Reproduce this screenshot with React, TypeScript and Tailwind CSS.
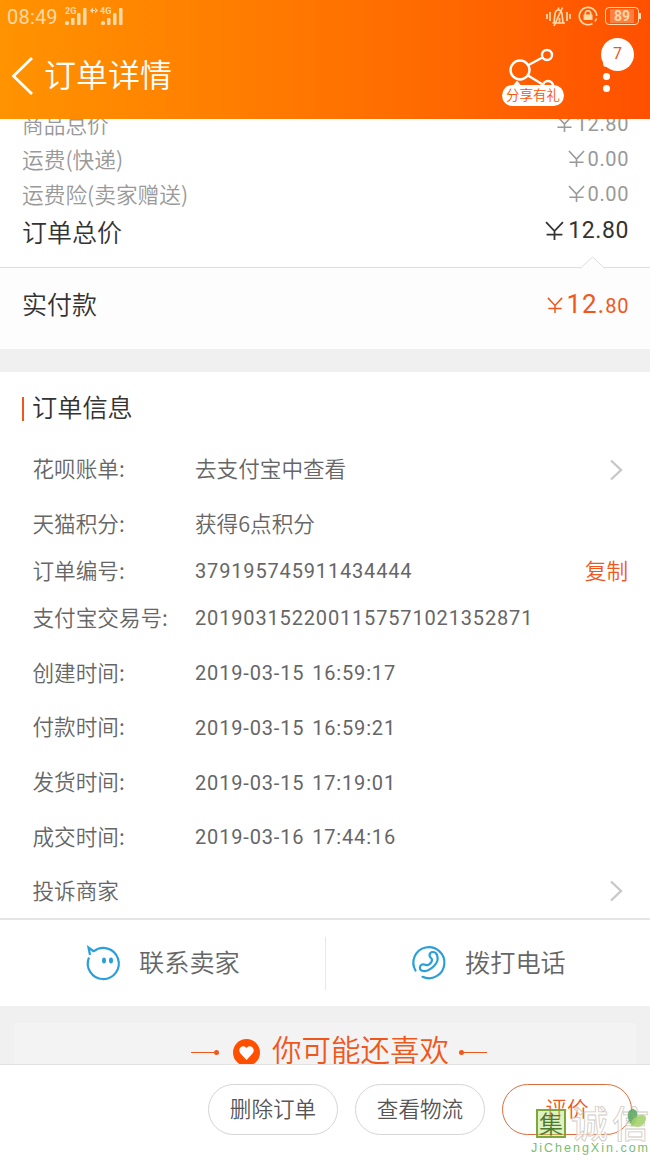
const fees = [
  { label: "商品总价", price: "12.80", row: "h-[35px] -mt-[12px]" },
  { label: "运费(快递)", price: "0.00", row: "h-[35px]" },
  { label: "运费险(卖家赠送)", price: "0.00", row: "h-[35px]" },
];

const infos = [
  { label: "花呗账单:", value: "去支付宝中查看", row: "h-[55px]", arrow: true },
  { label: "天猫积分:", value: "获得6点积分", row: "h-[55px]" },
  { label: "订单编号:", value: "379195745911434444", row: "h-[38px]", number: true, copy: true },
  { label: "支付宝交易号:", value: "2019031522001157571021352871", row: "h-[56px]", number: true },
  { label: "创建时间:", value: "2019-03-15 16:59:17", row: "h-[54px]", number: true },
  { label: "付款时间:", value: "2019-03-15 16:59:21", row: "h-[55px]", number: true },
  { label: "发货时间:", value: "2019-03-15 17:19:01", row: "h-[55px]", number: true },
  { label: "成交时间:", value: "2019-03-16 17:44:16", row: "h-[54px]", number: true },
  { label: "投诉商家", value: "", row: "h-[54px]", arrow: true },
];

const Yen = ({ className }: { className: string }) => (
  <svg className={className} viewBox="0 0 18 18" fill="none" stroke="currentColor" strokeWidth="1.7">
    <path d="M1 1 9 9.5 17 1M9 9.5V18M1.5 13h15" />
  </svg>
);

const Arrow = () => (
  <svg className="mr-[1px] h-[22px] w-[20px]" viewBox="0 0 20 22" fill="none" stroke="#c8c8c8" strokeWidth="2.4">
    <path d="m4 1.5 10 9.5-10 9.5" />
  </svg>
);

const Signal = () => (
  <svg className="h-[17px] w-[22px]" viewBox="0 0 22 17" fill="currentColor">
    <rect x="0" y="13" width="4" height="4" rx="1.5" />
    <rect x="6" y="10" width="3.5" height="7" rx="1" />
    <rect x="12" y="5" width="3.5" height="12" rx="1" />
    <rect x="18" y="0" width="3.5" height="17" rx="1" />
  </svg>
);

const StatusBar = () => (
  <div className="flex h-8 items-center justify-between pr-[9px] pl-[7px] text-[#ffd9a8]">
    <div className="flex items-center">
      <span className="w-[57px] pt-[2px] font-[Roboto] text-[20px] leading-none font-normal tracking-[0.2px]">08:49</span>
      <div className="relative ml-[1px] flex gap-[14px]">
        <Signal />
        <Signal />
        <span className="absolute -top-[2px] left-0 font-[Roboto] text-[9px] leading-[10px] font-bold">2G</span>
        <span className="absolute -top-[2px] left-[35px] font-[Roboto] text-[9px] leading-[10px] font-bold">4G</span>
        <svg className="absolute -top-[1px] left-[25px] h-[7px] w-[8px]" viewBox="0 0 8 7" fill="currentColor">
          <path d="M0 3.5 3 .5v6zM8 3.5 5 .5v6zM2 3h4v1H2z" />
        </svg>
      </div>
    </div>
    <div className="flex items-center">
      <svg className="h-[21px] w-[25px]" viewBox="0 0 25 21" fill="none" stroke="currentColor" strokeWidth="1.7">
        <path d="M1 8v5M4 6v9M21 6v9M24 8v5" />
        <path d="M6.5 17h12.5M8 16.5l1-8.5c.4-3 1.5-4 3.500-4s3 1 3.500 4l1 8.500M12.500 4V1.500M16.500 1.500 8 20M13.500 12v5" />
      </svg>
      <svg className="ml-[7px] h-5 w-5" viewBox="0 0 20 20" fill="none" stroke="currentColor" strokeWidth="1.6">
        <path d="M14.500 17.500A8.700 8.700 0 1 1 18.700 10M18.500 12.500l-1.500 3" />
        <rect x="5.500" y="8.500" width="9" height="5.500" fill="currentColor" stroke="none" />
        <path d="M7.300 9V7.500a2.700 2.700 0 0 1 5.400 0V9" />
      </svg>
      <div className="ml-[7px] flex h-[18px] w-[34px] items-center justify-center rounded-[4px] border-[1.5px] border-current">
        <span className="h-[14px] bg-white/25 px-[4px] font-[Roboto] text-[14px] leading-[14px] font-bold">89</span>
      </div>
      <span className="h-[6px] w-[2px] bg-current" />
    </div>
  </div>
);

const Header = () => (
  <header className="relative z-10 h-[119px] shrink-0 bg-linear-to-r from-[#ff9300] to-[#ff5000]">
    <StatusBar />
    <div className="flex h-[87px] items-center justify-between pr-[16px] pl-[11px] text-white">
      <div className="flex items-center">
        <svg className="h-[40px] w-[23px]" viewBox="0 0 23 40" fill="none" stroke="currentColor" strokeWidth="2.8">
          <path d="M21 2 2.5 20 21 38" />
        </svg>
        <h1 className="ml-[10px] pb-[5px] text-[32px] leading-none">订单详情</h1>
      </div>
      <div className="flex items-start">
        <div className="relative h-[60px] w-[62px]">
          <svg className="absolute top-[2px] left-[6px] h-[44px] w-[50px]" viewBox="0 0 50 44" fill="none" stroke="currentColor" strokeWidth="2.4">
            <circle cx="12" cy="22" r="9.5" />
            <circle cx="39" cy="7" r="5" />
            <circle cx="40" cy="38" r="5" />
            <path d="m20.500 17 14-7.500M20 27.500 35.500 37" />
          </svg>
          <span className="absolute top-[39px] left-0 flex h-[21px] w-[62px] items-center justify-center rounded-full bg-white pb-[1px] text-[13.5px] leading-none text-[#ff5000]">
            分享有礼
          </span>
          <span className="absolute top-[35px] left-[11px] h-[5px] w-[8px] bg-white [clip-path:polygon(50%_0,100%_100%,0_100%)]" />
        </div>
        <div className="relative ml-[37px] h-[60px] w-[33px]">
          <span className="absolute top-[14px] left-[2px] size-[7px] rounded-full bg-white" />
          <span className="absolute top-[27px] left-[2px] size-[7px] rounded-full bg-white" />
          <span className="absolute top-[39px] left-[2px] size-[7px] rounded-full bg-white" />
          <span className="absolute -top-[8px] left-0 flex size-[33px] items-center justify-center rounded-full bg-white font-[Roboto] text-[16px] font-normal text-[#e85a20]">
            7
          </span>
        </div>
      </div>
    </div>
  </header>
);

const PriceSummary = () => (
  <section className="flex shrink-0 flex-col bg-white">
    <div className="flex h-[148px] flex-col pt-[1px] pr-[21px] pl-[22px]">
      {fees.map((fee) => (
        <div key={fee.label} className={`flex shrink-0 items-center justify-between text-[#999] ${fee.row}`}>
          <span className="pb-[3px] text-[21.7px] leading-none">{fee.label}</span>
          <span className="flex items-center pb-[4px] font-[Roboto] text-[20px] leading-none font-normal tracking-[0.6px]">
            <Yen className="mr-[3px] size-[17px]" />
            {fee.price}
          </span>
        </div>
      ))}
      <div className="flex h-[39px] shrink-0 items-center justify-between text-[#333]">
        <span className="pb-[2px] text-[25px] leading-none">订单总价</span>
        <span className="flex items-center pb-[4px] font-[Roboto] text-[23px] leading-none font-normal tracking-[0.6px]">
          <Yen className="mr-[4px] size-[19px]" />
          12.80
        </span>
      </div>
    </div>
    <div className="relative flex h-[82px] items-center justify-between border-t border-[#dedede] bg-[#fdfdfd] pr-[21px] pb-[7px] pl-[22px]">
      <svg className="absolute -top-[12px] left-[580px] h-[13px] w-[25px]" viewBox="0 0 25 13" fill="#fdfdfd" stroke="#dedede">
        <path d="M0 12.500 12.500 1 25 12.500" />
      </svg>
      <span className="pb-[4px] text-[25px] leading-none text-[#333]">实付款</span>
      <span className="flex items-baseline pb-[2px] font-[Roboto] leading-none font-normal tracking-[0.6px] text-[#f0571d]">
        <Yen className="mr-[4px] size-[16px]" />
        <span className="text-[26px] tracking-[0.9px]">12.</span>
        <span className="text-[20px]">80</span>
      </span>
    </div>
  </section>
);

const OrderInfo = () => (
  <section className="h-[546px] shrink-0 bg-white">
    <div className="flex h-[70px] items-center pl-[22px]">
      <span className="mt-[4px] h-[24px] w-[2px] bg-[#f0571d]" />
      <h2 className="ml-[8px] text-[25.2px] leading-none text-[#333]">订单信息</h2>
    </div>
    {infos.map((info) => (
      <div key={info.label} className={`flex items-center pr-[22px] pl-[32.5px] text-[21.6px] leading-none text-[#666] ${info.row}`}>
        <span className="w-[162.5px] shrink-0 pb-[3px]">{info.label}</span>
        <span
          className={
            info.number ? "grow font-[Roboto] text-[20px] font-normal tracking-[0.84px] [word-spacing:2px]" : "grow pb-[3px]"
          }
        >
          {info.value}
        </span>
        {info.copy && <button className="pb-[3px] text-[#f0571d]">复制</button>}
        {info.arrow && <Arrow />}
      </div>
    ))}
  </section>
);

const Contact = () => (
  <section className="flex h-[88px] shrink-0 items-center border-t-2 border-[#e5e5e5] bg-white text-[25.2px] leading-none text-[#666]">
    <button className="flex h-[53px] w-[326px] items-center border-r border-[#e8e8e8] pl-[84px]">
      <svg className="h-[38px] w-[40px]" viewBox="0 0 40 38" fill="none" stroke="#2a9fdb" strokeWidth="2.2">
        <path d="M9.500 7.500A15.500 15.500 0 1 1 5 13.500M10 7.500 4.500 3.500 6 11" />
        <g fill="#2a9fdb" stroke="none">
          <ellipse cx="20" cy="16.500" rx="2" ry="3" />
          <ellipse cx="27" cy="16.500" rx="2" ry="3" />
        </g>
      </svg>
      <span className="ml-[15px] pb-[3px]">联系卖家</span>
    </button>
    <button className="flex h-[53px] items-center pl-[84px]">
      <svg className="mb-[2px] h-[40px] w-[40px]" viewBox="0 0 40 40" fill="none" stroke="#2a9fdb" strokeWidth="2.2" strokeLinecap="round">
        <path d="M5.500 28.500A15.500 15.500 0 1 1 12.500 34.800" />
        <path d="M19.500 13c.5-4 6-4 7.500 0 1.500 4 0 8-3 11-4 4-9 6-12.500 4.500-2.500-1.500-2-5 .5-6 3-1 3.500 1.500 6 .5 3-1.500 4-3.500 4-5.500-.5-1.500-2.500-2-2.500-4.500z" />
      </svg>
      <span className="ml-[15px] pb-[3px]">拨打电话</span>
    </button>
  </section>
);

const Recommend = () => (
  <section className="h-[58px] shrink-0 overflow-hidden bg-[#f0f0f0] px-[14px] pt-[17px]">
    <div className="flex h-[58px] items-center justify-center bg-[#f3f3f3] pl-[28px] text-[#f0571d]">
      <span className="h-px w-[23px] bg-current" />
      <span className="size-[5px] rounded-full bg-current" />
      <svg className="mx-[14px] size-[27px]" viewBox="0 0 27 27">
        <circle cx="13.500" cy="13.500" r="13.500" fill="#ff5000" />
        <path d="M13.500 21 7.500 14.500C3.500 9.500 10 4.500 13.500 9c3.500-4.500 10 .5 6 5.500z" fill="#fff" />
      </svg>
      <h2 className="-ml-[2px] pb-[6px] text-[29.5px] leading-none">你可能还喜欢</h2>
      <span className="ml-[10px] size-[5px] rounded-full bg-current" />
      <span className="h-px w-[23px] bg-current" />
    </div>
  </section>
);

const Watermark = () => (
  <div className="pointer-events-none absolute top-[1106px] left-[530px] h-[49px] w-[120px]">
    <span className="absolute top-[3px] left-[6px] flex h-[29px] w-[30px] items-center justify-center border-2 border-[#7fa83c] bg-[#b5e078]/45 pb-[2px] text-[24px] leading-none text-[#4d7a2e]">
      集
    </span>
    <svg className="absolute top-0 left-[38px] h-[40px] w-[82px]" viewBox="0 0 82 40">
      <text x="3" y="32" fontSize="37" fontWeight="500" fill="#fff" fillOpacity=".7" stroke="#d0cac2" strokeWidth=".8" textLength="78">
        诚信
      </text>
      <path d="M65 20c-8-7-6-17 0-17 6 1 6 10 0 17z" fill="#58a660" fillOpacity=".85" />
      <path d="M63 17c3-8 14-11 15-5 0 6-7 11-12 8-3 1-4 0-3-3z" fill="#a4d36b" fillOpacity=".85" />
    </svg>
    <span className="absolute top-[34px] left-[1px] font-[Liberation_Sans] text-[12.5px] leading-[17px] font-normal tracking-[2px] whitespace-nowrap text-[#7dbb70]">
      JiChengXin.com
    </span>
  </div>
);

const App = () => {
  return (
    <div className="relative flex h-[1155px] w-[650px] flex-col overflow-hidden bg-[#f0f0f0] font-['Noto_Sans_CJK_SC',sans-serif] font-[350]">
      <Header />
      <PriceSummary />
      <div className="h-[23px] shrink-0" />
      <OrderInfo />
      <Contact />
      <Recommend />
      <footer className="flex h-[91px] shrink-0 items-center justify-end gap-[17px] border-t border-[#e2e2e2] bg-white pr-[18px] pb-[2px] text-[21.6px] leading-none text-[#555]">
        <button className="h-[51px] w-[130px] rounded-full border border-[#d5d5d5] pb-[3px]">删除订单</button>
        <button className="h-[51px] w-[130px] rounded-full border border-[#d5d5d5] pb-[3px]">查看物流</button>
        <button className="h-[51px] w-[130px] rounded-full border border-[#dc6c3c] pb-[3px] text-[#f0571d]">评价</button>
      </footer>
      <Watermark />
    </div>
  );
};

export default App;
